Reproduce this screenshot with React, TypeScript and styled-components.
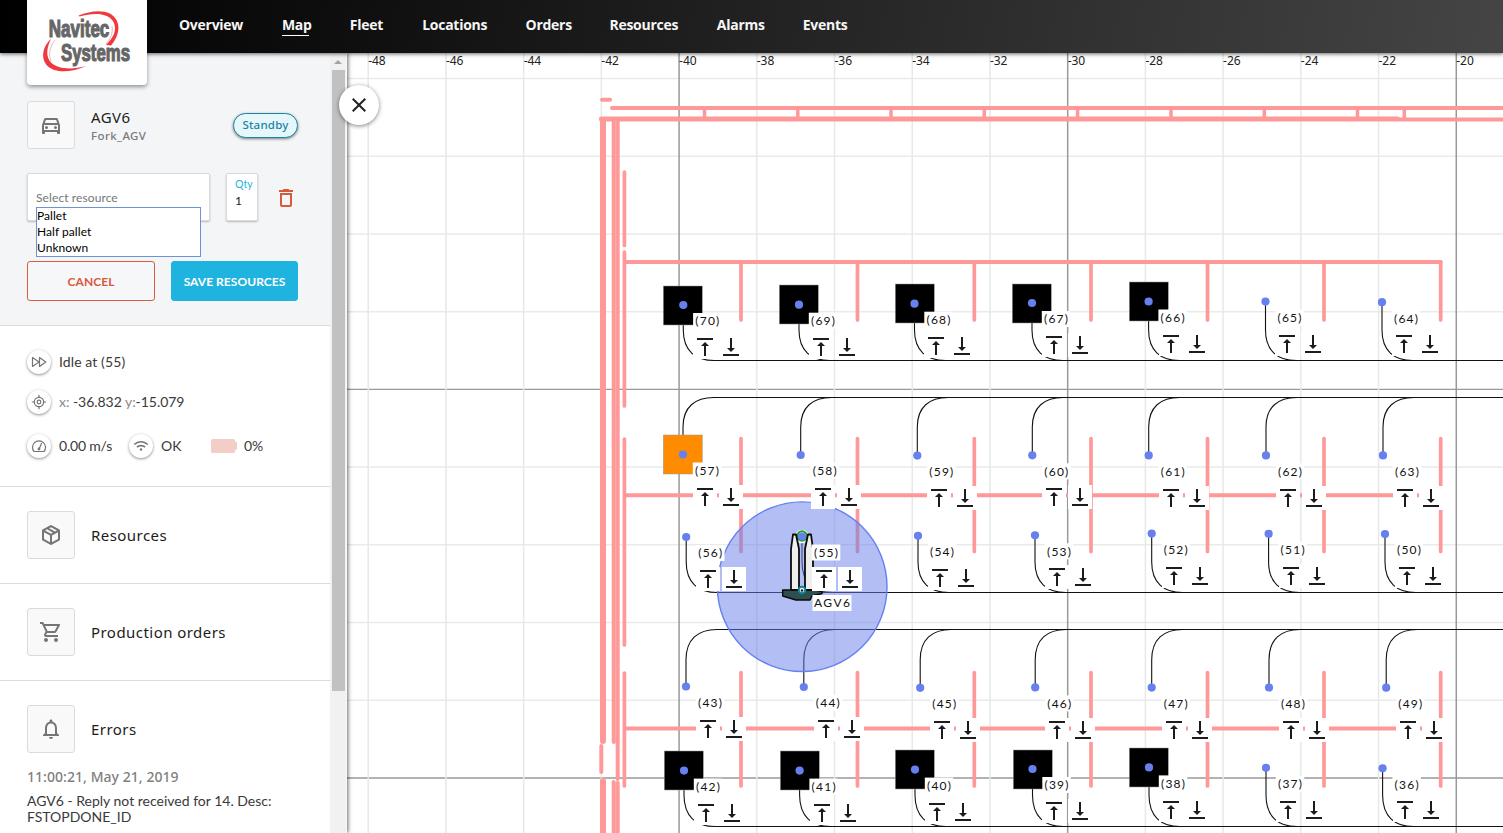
import React from 'react';
import styled, { createGlobalStyle, css } from 'styled-components';

const GlobalStyle = createGlobalStyle`
  *, *::before, *::after { box-sizing: border-box; }
  body { margin: 0; overflow: hidden; background: #fff; font-family: Lato, sans-serif; color: #222; }
`;

const Page = styled.div`
  display: flex;
  flex-direction: column;
  width: 100%;
  height: 100vh;
  overflow: hidden;
`;

const TopBar = styled.header`
  display: flex;
  align-items: flex-start;
  flex: 0 0 53px;
  height: 53px;
  padding-left: 27px;
  background: linear-gradient(100deg, #000 0%, #111 27%, #454545 100%);
  box-shadow: 0 1px 4px rgba(0, 0, 0, 0.6);
  position: relative;
  z-index: 3;
`;

const LogoCard = styled.div`
  flex: 0 0 120px;
  height: 85px;
  background: #fff;
  border-radius: 0 0 4px 4px;
  box-shadow: 0 2px 4px rgba(0, 0, 0, 0.4);
`;

const Nav = styled.nav`
  display: flex;
  padding: 16px 0 0 32px;
`;

const NavItem = styled.a<{ $w: number; $active?: boolean }>`
  width: ${(p) => p.$w}px;
  margin-right: 40.4px;
  height: 20px;
  font: 700 14px/18px 'Open Sans', sans-serif;
  letter-spacing: -0.27px;
  white-space: nowrap;
  color: #f6f6f6;
  ${(p) => p.$active && css`border-bottom: 1px solid #fff;`}
`;

const Body = styled.div`
  display: flex;
  flex: 1;
  min-height: 0;
`;

const Sidebar = styled.aside`
  display: flex;
  flex: 0 0 347px;
  position: relative;
  z-index: 2;
  background: #fff;
  box-shadow: 1px 0 4px rgba(0, 0, 0, 0.6);
`;

const Panel = styled.div`
  flex: 0 0 330px;
  overflow: hidden;
`;

const Scrollbar = styled.div`
  flex: 0 0 17px;
  display: flex;
  flex-direction: column;
  align-items: center;
  background: #f1f1f1;
  border-right: 1px solid #fafafa;
`;

const ScrollArrow = styled.div`
  width: 0;
  margin-top: 7px;
  border: 4px solid transparent;
  border-top: 0;
  border-bottom-color: #a3a3a3;
`;

const Thumb = styled.div`
  width: 13px;
  height: 621px;
  margin-top: 6px;
  background: #c1c1c1;
`;

const CloseButton = styled.button`
  position: absolute;
  left: 339px;
  top: 32px;
  width: 40px;
  height: 40px;
  padding: 0;
  display: grid;
  place-items: center;
  border: 0;
  border-radius: 50%;
  background: #fff;
  color: #222;
  box-shadow: 0 1px 4px rgba(0, 0, 0, 0.5);
`;

const VehicleSection = styled.section`
  height: 273px;
  padding: 48px 32px 0 27px;
  background: #f4f5f7;
  border-bottom: 1px solid #dadcdc;
`;

const HeadRow = styled.div`
  display: flex;
  align-items: center;
  height: 48px;
`;

const IconTile = styled.div`
  flex: 0 0 48px;
  height: 48px;
  display: grid;
  place-items: center;
  border: 1px solid #dadcdc;
  border-radius: 3px;
  background: #f9f9f9;
  color: #757575;
`;

const Names = styled.div<{ $drop?: number }>`
  flex: 1;
  margin-left: 16px;
  padding-top: ${(p) => p.$drop ?? 0}px;
`;

const Title = styled.div`
  font: 400 15px/18px 'Noto Sans', sans-serif;
  letter-spacing: 0.45px;
  color: #1c1c1c;
`;

const SubTitle = styled.div`
  margin-top: 1px;
  font: 500 11.5px/17px 'Noto Sans', sans-serif;
  letter-spacing: 0.4px;
  color: #7a7a7a;
`;

const StatusPill = styled.span`
  width: 65px;
  height: 25px;
  border: 1px solid #1c83a3;
  border-radius: 13px;
  background: #e6f7fc;
  box-shadow: 0 1px 3px rgba(0, 0, 0, 0.5);
  color: #1c83a3;
  font: 500 11.5px/22px 'Noto Sans', sans-serif;
  letter-spacing: 0.2px;
  text-align: center;
`;

const FieldRow = styled.div`
  display: flex;
  align-items: flex-start;
  margin-top: 24px;
`;

const SelectField = styled.div`
  position: relative;
  width: 183px;
  height: 48px;
  padding: 16px 8px 0;
  border: 1px solid #dadcdc;
  border-radius: 2px;
  background: #fff;
  box-shadow: 0 1px 2px rgba(0, 0, 0, 0.25);
  font-size: 12px;
  line-height: 16px;
  letter-spacing: 0.1px;
  color: #757575;
`;

const Options = styled.ul`
  position: absolute;
  left: 8px;
  top: 33px;
  width: 165px;
  height: 50px;
  margin: 0;
  padding: 0;
  list-style: none;
  border: 1px solid #6d92d6;
  background: #fff;
  color: #000;
  font-size: 12px;
  line-height: 16px;
  letter-spacing: 0.05px;
`;

const QtyField = styled.div`
  width: 32px;
  height: 48px;
  margin-left: 16px;
  padding: 2px 0 0 8px;
  border: 1px solid #dadcdc;
  border-radius: 2px;
  background: #fff;
  box-shadow: 0 1px 2px rgba(0, 0, 0, 0.25);
  font-size: 12px;
  line-height: 18px;
  color: #222;
`;

const QtyLabel = styled.div`
  font-size: 10.5px;
  line-height: 16px;
  letter-spacing: 0;
  color: #1fb3e0;
`;

const TrashButton = styled.span`
  display: grid;
  margin: 13px 0 0 16px;
  color: #d9593c;
`;

const ButtonRow = styled.div`
  display: flex;
  gap: 16px;
  margin-top: 40px;
`;

const Button = styled.button<{ $primary?: boolean }>`
  width: ${(p) => (p.$primary ? 127 : 128)}px;
  height: 40px;
  padding: 1px 0 0;
  border: 1px solid ${(p) => (p.$primary ? '#1fb3e0' : '#dc5b40')};
  border-radius: 3px;
  background: ${(p) => (p.$primary ? '#1fb3e0' : '#f6f7f9')};
  color: ${(p) => (p.$primary ? '#fff' : '#d9593c')};
  font: 700 12px/38px Lato, sans-serif;
  letter-spacing: 0.05px;
  white-space: nowrap;
`;

const StatusSection = styled.section`
  height: 161px;
  padding: 22px 27px 0;
  border-bottom: 1px solid #dadcdc;
`;

const StatRow = styled.div<{ $gap: number }>`
  display: flex;
  align-items: center;
  height: 28px;
  margin-bottom: ${(p) => p.$gap}px;
  font-size: 14px;
  line-height: 16px;
  color: #3a3a3a;
`;

const Dot = styled.span`
  display: grid;
  place-items: center;
  width: 24px;
  height: 24px;
  margin-right: 8px;
  border-radius: 50%;
  background: #fff;
  box-shadow: 0 1px 3px rgba(0, 0, 0, 0.45);
  color: #757575;
`;

const Stat = styled.span<{ $w?: number }>`
  display: flex;
  align-items: center;
  width: ${(p) => (p.$w ? `${p.$w}px` : 'auto')};
  white-space: pre;
`;

const Value = styled.span<{ $ls?: number }>`
  padding-bottom: 1px;
  letter-spacing: ${(p) => p.$ls ?? 0}px;
`;

const Muted = styled.span`
  color: #8a8a8a;
`;

const MenuSection = styled.section<{ $open?: boolean }>`
  height: ${(p) => (p.$open ? 'auto' : '97px')};
  padding: 24px 27px 0;
  border-bottom: ${(p) => (p.$open ? 0 : '1px solid #dadcdc')};
`;

const ErrorTime = styled.div`
  margin-top: 15px;
  font: 500 14px/18px 'Noto Sans', sans-serif;
  letter-spacing: 0.05px;
  color: #808080;
`;

const ErrorText = styled.div`
  margin-top: 7px;
  font-size: 14px;
  line-height: 16px;
  color: #3a3a3a;
`;

const MapSvg = styled.svg`
  display: block;
  flex: 1;
  min-width: 0;
  background: #fff;
`;

const NodeText = styled.text`
  font: 400 12px 'Lato', sans-serif;
  fill: #111;
`;

const AxisText = styled.text`
  font: 400 12px 'Noto Sans', sans-serif;
  fill: #222;
`;

function Logo() {
  return (
    <svg width="120" height="85" viewBox="27 0 120 85">
      <path d="M78.500 15.500 C94 9 112 9 117 21 C121 30 116 40 111 45.500 L106 45 C113 38 117 31 114 23 C109 12.500 94 12.500 79.500 16.500Z" fill="#ee3a3f" />
      <path d="M51 39 C43 46 40 58 47.500 66 C55 73.500 72 72.500 86 66 C72 70 58 69 51.500 63 C45 56.500 47 47 51 39Z" fill="#ee3a3f" />
      <path d="M55 40C50 46 48 54 51 61M112 26C113 33 111 38 106 44" fill="none" stroke="#f0686b" strokeWidth="0.500" />
      <g fill="#666" stroke="#666" strokeWidth="1.200" fontFamily="'Liberation Sans Narrow', 'Liberation Sans', sans-serif" fontWeight="700" fontSize="24">
        <text x="48.800" y="36.700" textLength="60.500" lengthAdjust="spacingAndGlyphs">Navitec</text>
        <text x="61" y="61.300" textLength="69" lengthAdjust="spacingAndGlyphs">Systems</text>
      </g>
    </svg>
  );
}

const ICONS: Record<string, string> = {
  car: 'M18.920 6.010C18.720 5.420 18.160 5 17.500 5h-11c-.66 0-1.210.42-1.420 1.010L3 12v8c0 .55.45 1 1 1h1c.55 0 1-.45 1-1v-1h12v1c0 .55.45 1 1 1h1c.55 0 1-.45 1-1v-8l-2.080-5.990zM6.850 7h10.290l1.080 3.110H5.770L6.850 7zM19 17H5v-5h14v5zM7.500 13a1.500 1.500 0 1 0 0 3 1.500 1.500 0 0 0 0-3zM16.500 13a1.500 1.500 0 1 0 0 3 1.500 1.500 0 0 0 0-3z',
  trash: 'M6 19c0 1.100.9 2 2 2h8c1.100 0 2-.9 2-2V7H6v12zM8 9h8v10H8V9zm7.500-5l-1-1h-5l-1 1H5v2h14V4h-3.500z',
  cart: 'M15.550 13c.75 0 1.410-.41 1.750-1.030l3.580-6.490A.996.996 0 0 0 20.010 4H5.210l-.94-2H1v2h2l3.600 7.590-1.350 2.440C4.520 15.370 5.480 17 7 17h12v-2H7l1.100-2h7.450zM6.160 6h12.150l-2.760 5H8.530L6.160 6zM7 18c-1.100 0-1.990.9-1.990 2S5.900 22 7 22s2-.9 2-2-.9-2-2-2zm10 0c-1.100 0-1.990.9-1.990 2s.89 2 1.990 2 2-.9 2-2-.9-2-2-2z',
  bell: 'M12 22c1.100 0 2-.9 2-2h-4c0 1.100.9 2 2 2zm6-6v-5c0-3.070-1.630-5.640-4.500-6.320V4c0-.83-.67-1.500-1.500-1.500s-1.500.67-1.500 1.500v.68C7.640 5.360 6 7.920 6 11v5l-2 2v1h16v-1l-2-2zm-2 1H8v-6c0-2.480 1.510-4.500 4-4.500s4 2.020 4 4.500v6z',
  close: 'M19 6.410L17.590 5 12 10.590 6.410 5 5 6.410 10.590 12 5 17.590 6.410 19 12 13.410 17.590 19 19 17.590 13.410 12z',
  box: 'M21 16.500c0 .38-.21.71-.53.88l-7.900 4.440c-.16.12-.36.18-.57.18s-.41-.06-.57-.18l-7.900-4.440A.991.991 0 0 1 3 16.500v-9c0-.38.21-.71.53-.88l7.900-4.440c.16-.12.36-.18.57-.18s.41.060.57.18l7.900 4.440c.32.17.53.5.53.88v9zM12 4.150L10.110 5.220 16 8.610 17.960 7.500 12 4.150zM6.040 7.500L12 10.850l1.960-1.100L8.080 6.350 6.040 7.500zM5 15.910l6 3.380v-6.710L5 9.210v6.700zm14 0v-6.700l-6 3.370v6.710l6-3.380z',
};

const Icon = ({ name, size = 24 }: { name: string; size?: number }) => (
  <svg width={size} height={size} viewBox="0 0 24 24" fill="currentColor">
    <path d={ICONS[name]} />
  </svg>
);

const LineIcon = ({ children }: { children: React.ReactNode }) => (
  <svg width="16" height="16" viewBox="0 0 16 16" fill="none" stroke="currentColor" strokeWidth="1.200" strokeLinejoin="round" strokeLinecap="round">
    {children}
  </svg>
);

const NAV: { label: string; w: number }[] = [
  { label: 'Overview', w: 62.5 },
  { label: 'Map', w: 27.5 },
  { label: 'Fleet', w: 32 },
  { label: 'Locations', w: 63 },
  { label: 'Orders', w: 43.5 },
  { label: 'Resources', w: 67 },
  { label: 'Alarms', w: 45.5 },
  { label: 'Events', w: 44 },
];

type Loc = { id: number; x: number; y: number; load?: string };
type Lane = { bend: number; line: number; locs: Loc[] };

const lane = (bend: number, line: number, first: number, step: number, pts: [number, number][], loads: string[] = []): Lane => ({
  bend,
  line,
  locs: pts.map(([x, y], i) => ({ id: first + step * i, x, y, load: loads[i] })),
});

const black5 = ['#000', '#000', '#000', '#000', '#000'];

const LANES: Lane[] = [
  lane(330, 360.5, 70, -1, [[683.3, 305], [799, 304.7], [914.5, 303.7], [1032, 303], [1148.6, 301.5], [1265.5, 301.6], [1382, 302.2]], black5),
  lane(427, 397.5, 57, 1, [[683, 454.5], [800.7, 455], [917.3, 455.6], [1032.3, 455.3], [1148.7, 455.4], [1266, 455.4], [1383, 455.4]], ['#ff8c00']),
  lane(562, 592.5, 56, -1, [[686.2, 537], [802, 536.5], [918, 535.8], [1035, 535.3], [1151.7, 533.6], [1268.6, 533.8], [1385, 534]]),
  lane(660, 629.5, 43, 1, [[686, 686.5], [803.8, 687], [920.2, 687.8], [1035.2, 687.4], [1151.7, 687.6], [1269, 687.5], [1386.2, 687.7]]),
  lane(795, 826.5, 42, -1, [[684, 770.6], [799.6, 770.6], [915, 769.6], [1032.5, 769], [1149, 767.4], [1266, 767.8], [1382.6, 768.3]], black5),
];

const lanePath = (x: number, y: number, bend: number, line: number) => {
  const d = line - bend;
  return `M${x} ${y}V${bend}C${x} ${bend + d * 0.68} ${x + 12} ${line} ${x + 31} ${line}`;
};

const PICK = 'M8 11h3v10h2V11h3l-4-4-4 4zM4 3v2h16V3H4z';
const DROP = 'M16 13h-3V3h-2v10H8l4 4 4-4zM4 19v2h16v-2H4z';

const BAYS = [741, 857.5, 974.3, 1091, 1207.5, 1324, 1440.7];
const TICKS = [704.5, 797.8, 891, 984.3, 1077.6, 1171, 1264.3, 1357.5, 1404.300];

function Tag({ x, y, id }: { x: number; y: number; id: number }) {
  return (
    <g>
      <rect x={x + 9.8} y={y + 8} width="28.500" height="16" fill="#fff" />
      <NodeText x={x + 12} y={y + 20.3} textLength="24">({id})</NodeText>
      <g transform={`translate(${Math.round(x + 9.9)} ${Math.round(y + 30.1)})`}>
        <rect width="24" height="24" fill="#fff" />
        <path d={PICK} fill="#1c1c1c" />
        <g transform="translate(26 0)">
          <rect width="24" height="24" fill="#fff" />
          <path d={DROP} fill="#1c1c1c" />
        </g>
      </g>
    </g>
  );
}

function FacilityMap() {
  const cols = Array.from({ length: 15 }, (_, i) => ({ v: -48 + i * 2, x: 368.2 + i * 77.72 }));
  const rows = Array.from({ length: 10 }, (_, i) => 78.500 + i * 77.72);
  return (
    <MapSvg width="1156" height="780" viewBox="347 53 1156 780">
      {rows.map((y, i) => (
        <path key={y} d={`M347 ${y}H1503`} stroke={i % 5 === 4 ? '#999' : '#e9ebeb'} strokeWidth={i % 5 === 4 ? 1.3 : 1.5} />
      ))}
      {cols.map(({ v, x }) => (
        <path key={v} d={`M${x} 53V833`} stroke={v % 10 === 0 ? '#999' : '#e6e9e9'} strokeWidth="1.500" />
      ))}
      {cols.map(({ v, x }) => (
        <AxisText key={v} x={x} y="65" textLength="17.500">{v}</AxisText>
      ))}

      <g stroke="#ff9999" strokeWidth="4" strokeLinecap="round" fill="none">
        <path d="M602 99.800H610M612 108H1505M601 119.500H1505" />
        <path d="M601 118.500H1398" />
        {TICKS.map((x) => <path key={x} d={`M${x} 110V118`} strokeWidth="3.500" />)}
        <path d="M603 121V741M603 781V835" strokeWidth="6" />
        <path d="M601.300 746V772" />
        <path d="M613.700 121V742M617.700 121V779M613.700 782V835M617.700 783V835" />
        <path d="M615.700 121V742M615.700 783V835" stroke="#ffb4b4" strokeWidth="0.700" />
        <path d="M624.400 172V245.500M624.400 252V406M624.400 439V645M624.400 673V786" strokeWidth="3.700" />
        <path d="M625 262H1440.700M625 495.300H1440.700M625 728.500H1440.700" />
        {BAYS.map((x) => (
          <path key={x} d={`M${x} 262V320M${x} 438.500V551.500M${x} 672.500V786`} strokeWidth="3.700" />
        ))}
      </g>

      <g stroke="#111" strokeWidth="1.100" fill="none">
        {LANES.map((l) => (
          <g key={l.line}>
            <path d={`M${l.locs[0].x + 30} ${l.line}H1503`} />
            {l.locs.map((n) => <path key={n.id} d={lanePath(n.x, n.y, l.bend, l.line)} />)}
          </g>
        ))}
      </g>

      {LANES.map((l) => l.locs.map((n) => n.load && (
        <rect key={n.id} x={Math.round(n.x - 19.9) + 0.3} y={Math.round(n.y - 19.5)} width="39" height="39" fill={n.load} stroke="#999" strokeWidth="0.500" />
      )))}

      <circle cx="802.200" cy="586.700" r="84.800" fill="#667eea" fillOpacity="0.500" stroke="#6680ef" strokeWidth="1.400" />

      <g stroke="#0a0a0a" strokeWidth="1.500" strokeLinejoin="round">
        <path d="M782.700 590H815L822 591.500V593.500L812 596L810 600H796L782.700 596Z" fill="#2f4f4f" />
        <circle cx="802" cy="536.500" r="6" fill="#fff" stroke="#fff" />
        <circle cx="802" cy="536" r="4.700" fill="none" stroke="#16a016" strokeWidth="2" />
        <path d="M791 590V549L793 534.500H796L799 549V590Z" fill="#eee" strokeWidth="1.800" />
        <path d="M805 590V549L808 534.500H811L813 549V590Z" fill="#eee" strokeWidth="1.800" />
      </g>

      {LANES.map((l) => l.locs.map((n) => <Tag key={n.id} {...n} />))}
      {LANES.map((l) => l.locs.map((n) => <circle key={n.id} cx={n.x} cy={n.y} r="4.100" fill="#6680f0" />))}

      <circle cx="802" cy="590" r="3.300" fill="#fff" stroke="#0a8597" strokeWidth="2" />
      <circle cx="802" cy="590.500" r="1.300" fill="#123" />
      <rect x="812.500" y="595" width="39" height="16" fill="#fff" />
      <NodeText x="814" y="607" textLength="36">AGV6</NodeText>
    </MapSvg>
  );
}

export default function App() {
  return (
    <>
      <GlobalStyle />
      <Page>
        <TopBar>
          <LogoCard><Logo /></LogoCard>
          <Nav>
            {NAV.map((n) => (
              <NavItem key={n.label} $w={n.w} $active={n.label === 'Map'}>{n.label}</NavItem>
            ))}
          </Nav>
        </TopBar>
        <Body>
          <Sidebar>
            <Panel>
              <VehicleSection>
                <HeadRow>
                  <IconTile><Icon name="car" /></IconTile>
                  <Names $drop={2}>
                    <Title>AGV6</Title>
                    <SubTitle>Fork_AGV</SubTitle>
                  </Names>
                  <StatusPill>Standby</StatusPill>
                </HeadRow>
                <FieldRow>
                  <SelectField>
                    Select resource
                    <Options>
                      <li>Pallet</li>
                      <li>Half pallet</li>
                      <li>Unknown</li>
                    </Options>
                  </SelectField>
                  <QtyField>
                    <QtyLabel>Qty</QtyLabel>
                    1
                  </QtyField>
                  <TrashButton><Icon name="trash" /></TrashButton>
                </FieldRow>
                <ButtonRow>
                  <Button>CANCEL</Button>
                  <Button $primary>SAVE RESOURCES</Button>
                </ButtonRow>
              </VehicleSection>
              <StatusSection>
                <StatRow $gap={12}>
                  <Dot>
                    <LineIcon><path d="M1.500 3.500V12.500L8 8ZM8.500 3.500V12.500L14.800 8Z" /></LineIcon>
                  </Dot>
                  <Value $ls={0.1}>Idle at (55)</Value>
                </StatRow>
                <StatRow $gap={16}>
                  <Dot>
                    <LineIcon>
                      <circle cx="8" cy="8" r="4.700" />
                      <circle cx="8" cy="8" r="1.800" />
                      <path d="M8 1.300V3M8 13V14.700M1.300 8H3M13 8H14.700" />
                    </LineIcon>
                  </Dot>
                  <Value $ls={-0.04}><Muted>x: </Muted>-36.832 <Muted>y:</Muted>-15.079</Value>
                </StatRow>
                <StatRow $gap={0}>
                  <Stat $w={102}>
                    <Dot>
                      <LineIcon>
                        <path d="M3 13.500A6.500 6.500 0 1 1 13 13.500ZM8 11L10.500 5.500" />
                        <circle cx="8" cy="11" r="0.800" />
                      </LineIcon>
                    </Dot>
                    <Value $ls={-0.2}>0.00 m/s</Value>
                  </Stat>
                  <Stat $w={82}>
                    <Dot>
                      <svg width="16" height="16" viewBox="0 0 16 16" fill="none" stroke="currentColor" strokeWidth="1.600">
                        <path d="M1.200 6.500A9.800 9.800 0 0 1 14.800 6.500M3.900 9.200A6 6 0 0 1 12.100 9.200" />
                        <circle cx="8" cy="11.500" r="1.200" fill="currentColor" stroke="none" />
                      </svg>
                    </Dot>
                    <Value>OK</Value>
                  </Stat>
                  <Stat>
                    <svg width="33" height="14" viewBox="0 0 33 14">
                      <path d="M1.500 0H22.500Q24 0 24.500 3H26V10.500H24.500Q24 14 22.500 14H1.500Q0 14 0 12.500V1.500Q0 0 1.500 0Z" fill="#f3cec6" />
                    </svg>
                    <Value>0%</Value>
                  </Stat>
                </StatRow>
              </StatusSection>
              <MenuSection>
                <HeadRow>
                  <IconTile><Icon name="box" /></IconTile>
                  <Names><Title>Resources</Title></Names>
                </HeadRow>
              </MenuSection>
              <MenuSection>
                <HeadRow>
                  <IconTile><Icon name="cart" /></IconTile>
                  <Names><Title>Production orders</Title></Names>
                </HeadRow>
              </MenuSection>
              <MenuSection $open>
                <HeadRow>
                  <IconTile><Icon name="bell" /></IconTile>
                  <Names><Title>Errors</Title></Names>
                </HeadRow>
                <ErrorTime>11:00:21, May 21, 2019</ErrorTime>
                <ErrorText>AGV6 - Reply not received for 14. Desc: FSTOPDONE_ID</ErrorText>
              </MenuSection>
            </Panel>
            <Scrollbar>
              <ScrollArrow />
              <Thumb />
            </Scrollbar>
            <CloseButton aria-label="Close"><Icon name="close" /></CloseButton>
          </Sidebar>
          <FacilityMap />
        </Body>
      </Page>
    </>
  );
}
